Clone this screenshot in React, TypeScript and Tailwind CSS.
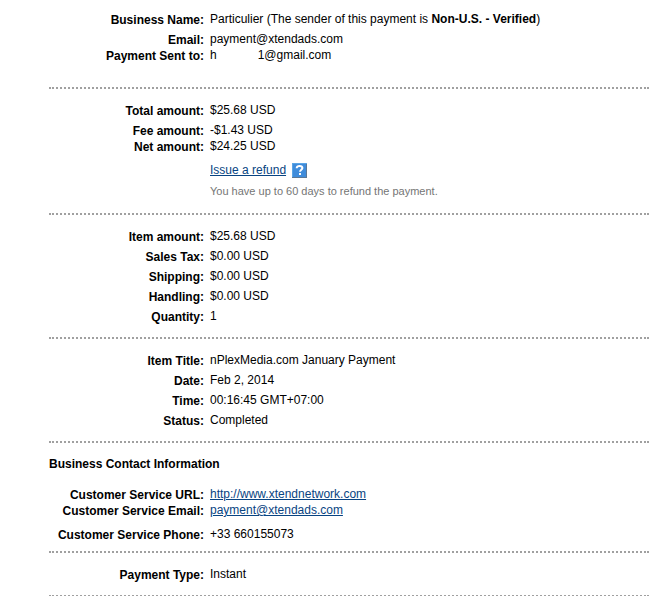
import React from "react";
import type { ReactNode } from "react";

type RowProps = {
  label: string;
  children: ReactNode;
  className?: string;
};

const Section = ({ children, className = "" }: { children: ReactNode; className?: string }) => (
  <section className={`border-b-2 border-dotted border-[#a0a0a0] ${className}`}>
    {children}
  </section>
);

const Row = ({ label, children, className = "" }: RowProps) => (
  <div className={`flex gap-[6px] ${className}`}>
    <dt className="w-[155px] shrink-0 pt-px -mb-px text-right font-bold">{label}</dt>
    <dd className="min-w-0 grow">{children}</dd>
  </div>
);

const HelpIcon = () => (
  <svg width="15" height="15" viewBox="0 0 15 15">
    <rect width="15" height="15" fill="#5aa5e6" />
    <path d="M1 14h13V1h1v14H0v-1z" fill="#5b7896" />
    <rect x="1" y="1" width="13" height="13" fill="#3f8cdb" />
    <path
      d="M4.7 5.2C4.7 3.7 5.9 2.9 7.5 2.9s2.9.9 2.9 2.2c0 1.6-2.4 1.7-2.4 3.7"
      fill="none"
      stroke="#ffffff"
      strokeWidth="2"
    />
    <rect x="7" y="10" width="2" height="2" fill="#ffffff" />
  </svg>
);

const amounts = [
  { label: "Item amount:", value: "$25.68 USD" },
  { label: "Sales Tax:", value: "$0.00 USD" },
  { label: "Shipping:", value: "$0.00 USD" },
  { label: "Handling:", value: "$0.00 USD" },
  { label: "Quantity:", value: "1" },
];

const details = [
  { label: "Item Title:", value: "nPlexMedia.com January Payment" },
  { label: "Date:", value: "Feb 2, 2014" },
  { label: "Time:", value: "00:16:45 GMT+07:00" },
  { label: "Status:", value: "Completed" },
];

const linkStyle = "text-[#084482] underline";

export default function App() {
  return (
    <main className="overflow-hidden bg-white pl-[49px] pr-[22px] font-['Liberation_Sans',Arial,sans-serif] text-[12px] leading-4 text-black">
      <Section className="pt-[11px] pb-6">
        <dl>
          <Row label="Business Name:" className="mb-1">
            Particulier (The sender of this payment is <b>Non-U.S.</b> <b>-</b> <b>Verified</b>)
          </Row>
          <Row label="Email:">payment@xtendads.com</Row>
          <Row label="Payment Sent to:">
            <span className="flex gap-[41px]">
              <span>h</span>
              <span>1@gmail.com</span>
            </span>
          </Row>
        </dl>
      </Section>

      <Section className="pt-[13px] pb-[14px]">
        <dl>
          <Row label="Total amount:" className="mb-1">$25.68 USD</Row>
          <Row label="Fee amount:">-$1.43 USD</Row>
          <Row label="Net amount:">$24.25 USD</Row>
        </dl>
        <div className="mt-2 flex items-center gap-[6px] pl-[161px]">
          <a href="#refund" className={linkStyle}>Issue a refund</a>
          <button type="button" aria-label="Help">
            <HelpIcon />
          </button>
        </div>
        <p className="mt-[5px] pl-[161px] text-[11px] text-[#757575]">
          You have up to 60 days to refund the payment.
        </p>
      </Section>

      <Section className="py-[13px]">
        <dl className="flex flex-col gap-1">
          {amounts.map((item) => (
            <Row key={item.label} label={item.label}>{item.value}</Row>
          ))}
        </dl>
      </Section>

      <Section className="py-[13px]">
        <dl className="flex flex-col gap-1">
          {details.map((item) => (
            <Row key={item.label} label={item.label}>{item.value}</Row>
          ))}
        </dl>
      </Section>

      <Section className="pt-[13px] pb-[9px]">
        <h2 className="mb-[14px] font-bold">Business Contact Information</h2>
        <dl>
          <Row label="Customer Service URL:">
            <a href="http://www.xtendnetwork.com" className={linkStyle}>http://www.xtendnetwork.com</a>
          </Row>
          <Row label="Customer Service Email:" className="mb-2">
            <a href="mailto:payment@xtendads.com" className={linkStyle}>payment@xtendads.com</a>
          </Row>
          <Row label="Customer Service Phone:">+33 660155073</Row>
        </dl>
      </Section>

      <Section className="py-[13px]">
        <dl>
          <Row label="Payment Type:">Instant</Row>
        </dl>
      </Section>
    </main>
  );
}
